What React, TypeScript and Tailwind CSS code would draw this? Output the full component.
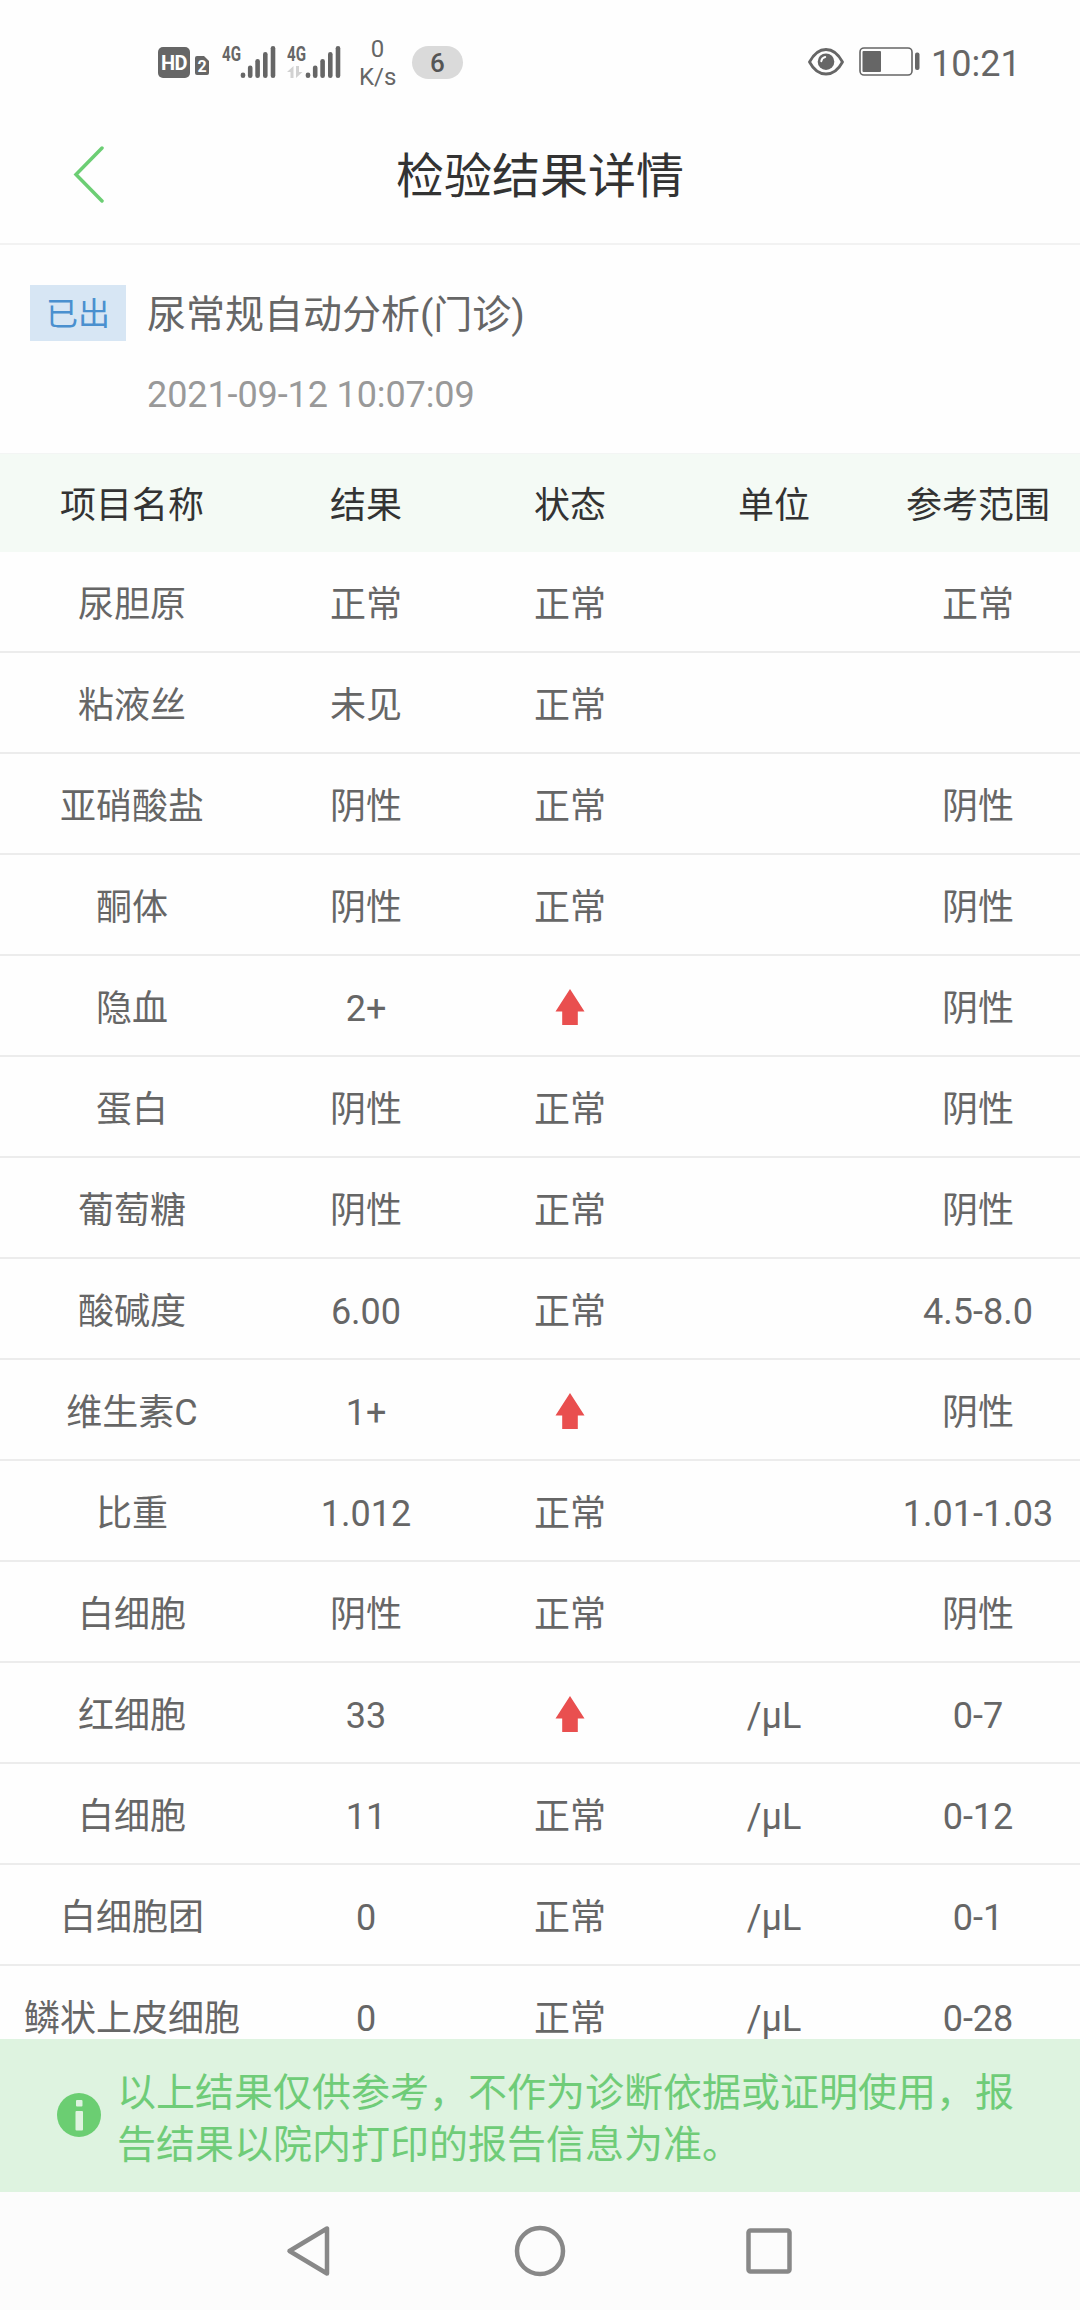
type Row = { name: string; result: string; high?: boolean; unit?: string; range?: string };

const rows: Row[] = [
  { name: "尿胆原", result: "正常", range: "正常" },
  { name: "粘液丝", result: "未见" },
  { name: "亚硝酸盐", result: "阴性", range: "阴性" },
  { name: "酮体", result: "阴性", range: "阴性" },
  { name: "隐血", result: "2+", high: true, range: "阴性" },
  { name: "蛋白", result: "阴性", range: "阴性" },
  { name: "葡萄糖", result: "阴性", range: "阴性" },
  { name: "酸碱度", result: "6.00", range: "4.5-8.0" },
  { name: "维生素C", result: "1+", high: true, range: "阴性" },
  { name: "比重", result: "1.012", range: "1.01-1.03" },
  { name: "白细胞", result: "阴性", range: "阴性" },
  { name: "红细胞", result: "33", high: true, unit: "/μL", range: "0-7" },
  { name: "白细胞", result: "11", unit: "/μL", range: "0-12" },
  { name: "白细胞团", result: "0", unit: "/μL", range: "0-1" },
  { name: "鳞状上皮细胞", result: "0", unit: "/μL", range: "0-28" },
];

const columns = "grid grid-cols-[264px_204px_204px_204px_204px] items-center text-center";

function Signal({ data = false }: { data?: boolean }) {
  return (
    <svg className="block h-[48px] w-[56px]" viewBox="0 -12 56 48" fill="none">
      <text x="0" y="16.500" fontSize="20" fontWeight="700" fill="#666" textLength="19" lengthAdjust="spacingAndGlyphs">
        4G
      </text>
      {data && (
        <g fill="#d2d2d2">
          <path d="M3.500 34V28H0L6.500 22V34Z" />
          <path d="M9 22V34L15.500 28H12V22Z" />
        </g>
      )}
      <g stroke="#666" strokeWidth="4.600" strokeLinecap="round">
        <path d="M21 30.700V31.700" />
        <path d="M28.200 23.800V31.700" />
        <path d="M35.600 17.300V31.700" />
        <path d="M43.300 10.300V31.700" />
        <path d="M51 4.300V31.700" />
      </g>
    </svg>
  );
}

function StatusBar() {
  return (
    <div className="flex h-[100px] items-start pl-[158px] pr-[62px] text-[#666]">
      <div className="mt-[47px] flex h-[31px] w-8 items-center justify-center rounded-[5px] bg-[#666] text-[20px] font-bold leading-none tracking-[-0.5px] text-white">
        HD
      </div>
      <svg className="ml-[5px] mt-[56px] block h-[19px] w-[14px]" viewBox="0 0 14 19">
        <path d="M2 0H9L14 5V17Q14 19 12 19H2Q0 19 0 17V2Q0 0 2 0Z" fill="#666" />
        <text x="7" y="16" fontSize="16" fontWeight="700" fill="#fff" textAnchor="middle">
          2
        </text>
      </svg>
      <div className="ml-[13px] mt-[32px]">
        <Signal />
      </div>
      <div className="ml-[9px] mt-[32px]">
        <Signal data />
      </div>
      <div className="ml-4 mt-[35px] w-[37px] text-center text-[24px] leading-[28px]">
        0<br />
        K/s
      </div>
      <div className="ml-4 mt-[46px] flex h-[33px] w-[51px] items-center justify-center rounded-full bg-[#dadada] text-[26px] font-medium leading-none text-[#555]">
        6
      </div>
      <svg className="ml-auto mt-[48px] block h-[28px] w-[36px]" viewBox="0 0 36 28" fill="none">
        <path d="M1.500 14C6 5.500 12 1.500 18 1.500S30 5.500 34.500 14C30 22.500 24 26 18 26S6 22.500 1.500 14Z" stroke="#666" strokeWidth="2.800" strokeLinejoin="round" />
        <circle cx="18" cy="13.700" r="8.300" fill="#666" />
        <path d="M13.300 13.200Q13.800 9.700 17.200 9" stroke="#fefefe" strokeWidth="2" strokeLinecap="round" />
      </svg>
      <svg className="ml-[15px] mt-[47px] block h-[29px] w-[61px]" viewBox="0 0 61 29" fill="none">
        <rect x="1" y="1" width="52" height="27" rx="4" stroke="#666" strokeWidth="1.600" />
        <rect x="3.500" y="4" width="18.500" height="21" rx="1" fill="#666" />
        <rect x="56" y="5.500" width="4.500" height="17.500" rx="2" fill="#666" />
      </svg>
      <div className="ml-[11px] mt-[43px] w-[87px] whitespace-nowrap text-[36px] leading-[42px]">10:21</div>
    </div>
  );
}

function UpArrow() {
  return (
    <svg className="mx-auto -mt-1 block h-9 w-[30px]" viewBox="0 0 30 36">
      <path d="M15 0L29.500 22.500H22.800V36H7.200V22.500H0.500Z" fill="#e94f4f" />
    </svg>
  );
}

export default function App() {
  return (
    <div className="flex h-[2310px] w-[1080px] flex-col overflow-hidden bg-[#fefefe] font-['Roboto','Noto_Sans_CJK_SC',sans-serif] text-[#666]">
      <StatusBar />
      <header className="grid h-[145px] shrink-0 grid-cols-[1fr_auto_1fr] items-center border-b-2 border-[#f2f2f2]">
        <svg className="ml-[73px] mt-1 block h-[58px] w-8" viewBox="0 0 32 58" fill="none">
          <path d="M29 3L3 29.500L29 56" stroke="#6cce74" strokeWidth="3.500" strokeLinecap="round" />
        </svg>
        <h1 className="pt-[11px] text-[48px] leading-[60px] text-[#333]">检验结果详情</h1>
      </header>
      <section className="flex h-[208px] shrink-0 items-start pl-[30px] pt-10">
        <span className="flex h-14 w-24 items-center justify-center bg-[#d7e6f4] pt-[3px] text-[32px] leading-[53px] text-[#4a90cf]">已出</span>
        <div className="ml-[21px]">
          <h2 className="pt-[2px] text-[39px] leading-[56px]">尿常规自动分析(门诊)</h2>
          <p className="mt-6 text-[36px] leading-[56px] tracking-[-0.1px] text-[#999]">2021-09-12 10:07:09</p>
        </div>
      </section>
      <main className="min-h-0 flex-1 overflow-hidden text-[36px] leading-[54px]">
        <div className={`${columns} h-[99px] border-t border-[#f3f5f4] bg-[#f4faf5] pt-[6px] text-[#333]`}>
          <span>项目名称</span>
          <span>结果</span>
          <span>状态</span>
          <span>单位</span>
          <span>参考范围</span>
        </div>
        {rows.map((r, i) => (
          <div key={i} className={`${columns} h-[101px] border-b-2 border-[#ececec] pt-[6px]`}>
            <span className="whitespace-nowrap">{r.name}</span>
            <span>{r.result}</span>
            <span>{r.high ? <UpArrow /> : "正常"}</span>
            <span>{r.unit}</span>
            <span>{r.range}</span>
          </div>
        ))}
      </main>
      <aside className="flex h-[153px] shrink-0 items-center bg-[#def3e0] pl-[57px] text-[#6fcc78]">
        <svg className="-mt-[2px] block h-[44px] w-[44px] shrink-0" viewBox="0 0 44 44">
          <circle cx="22" cy="22" r="22" fill="#6bce72" />
          <rect x="19" y="7" width="6.500" height="6.500" rx="1" fill="#def3e0" />
          <rect x="18.500" y="18" width="7.500" height="19.500" rx="1" fill="#def3e0" />
        </svg>
        <p className="ml-4 w-[910px] pt-[6px] text-[39px] leading-[52px]">
          以上结果仅供参考，不作为诊断依据或证明使用，报告结果以院内打印的报告信息为准。
        </p>
      </aside>
      <nav className="flex h-[118px] shrink-0 items-center bg-[#fcfcfc] pl-[286px]">
        <svg className="block h-[52px] w-[46px]" viewBox="0 0 46 52" fill="none" stroke="#888" strokeWidth="4.500" strokeLinejoin="round">
          <path d="M41 3.500V48.500L3.500 26Z" />
        </svg>
        <svg className="ml-[182px] block h-[52px] w-[52px]" viewBox="0 0 52 52" fill="none" stroke="#888" strokeWidth="4.500">
          <circle cx="26" cy="26" r="23" />
        </svg>
        <svg className="ml-[180px] block h-[46px] w-[46px]" viewBox="0 0 46 46" fill="none" stroke="#888" strokeWidth="4.500">
          <rect x="2.500" y="2.500" width="41" height="41" rx="2" />
        </svg>
      </nav>
    </div>
  );
}
